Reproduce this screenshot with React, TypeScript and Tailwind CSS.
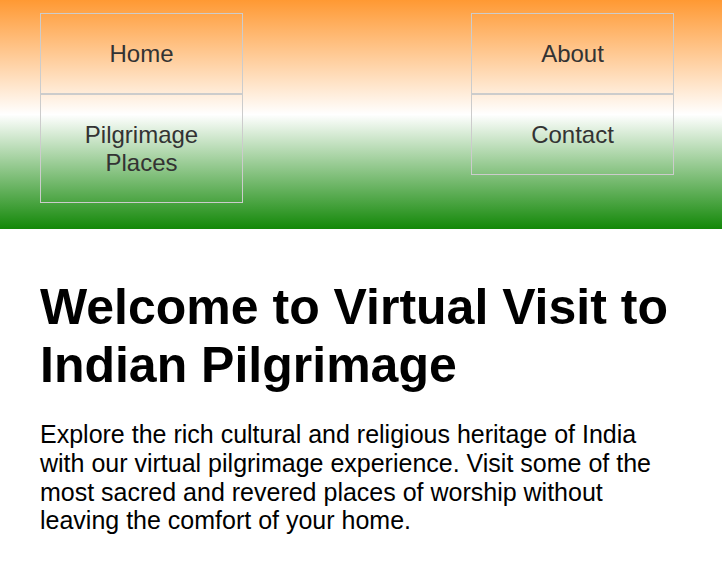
import React from "react";

const leftLinks = ["Home", "Pilgrimage Places"];
const rightLinks = ["About", "Contact"];

const NavColumn = ({ items }: { items: string[] }) => (
  <ul className="flex flex-col w-[203px]">
    {items.map((item) => (
      <li key={item}>
        <a
          href="#"
          className="block border border-[#cccccc] px-[40px] py-[25.5px] text-center text-[24px] leading-[28px] text-[#333333]"
        >
          {item}
        </a>
      </li>
    ))}
  </ul>
);

export default function App() {
  return (
    <div className="min-h-screen bg-white font-['Liberation_Sans',Arial,sans-serif]">
      {/* Header with tricolour gradient */}
      <header className="bg-[linear-gradient(#ff9933,#ffffff,#138808)] pt-[13px] pb-[26px] pl-[40px] pr-[48px]">
        <nav className="flex justify-between items-start">
          <NavColumn items={leftLinks} />
          <NavColumn items={rightLinks} />
        </nav>
      </header>

      {/* Intro */}
      <main className="px-[40px] pt-[50px]">
        <h1 className="text-[50px] font-bold leading-[1.15] text-black">
          Welcome to Virtual Visit to Indian Pilgrimage
        </h1>
        <p className="mt-[26px] text-[25px] leading-[1.15] text-black">
          Explore the rich cultural and religious heritage of India with our virtual pilgrimage
          experience. Visit some of the most sacred and revered places of worship without leaving
          the comfort of your home.
        </p>
      </main>
    </div>
  );
}
